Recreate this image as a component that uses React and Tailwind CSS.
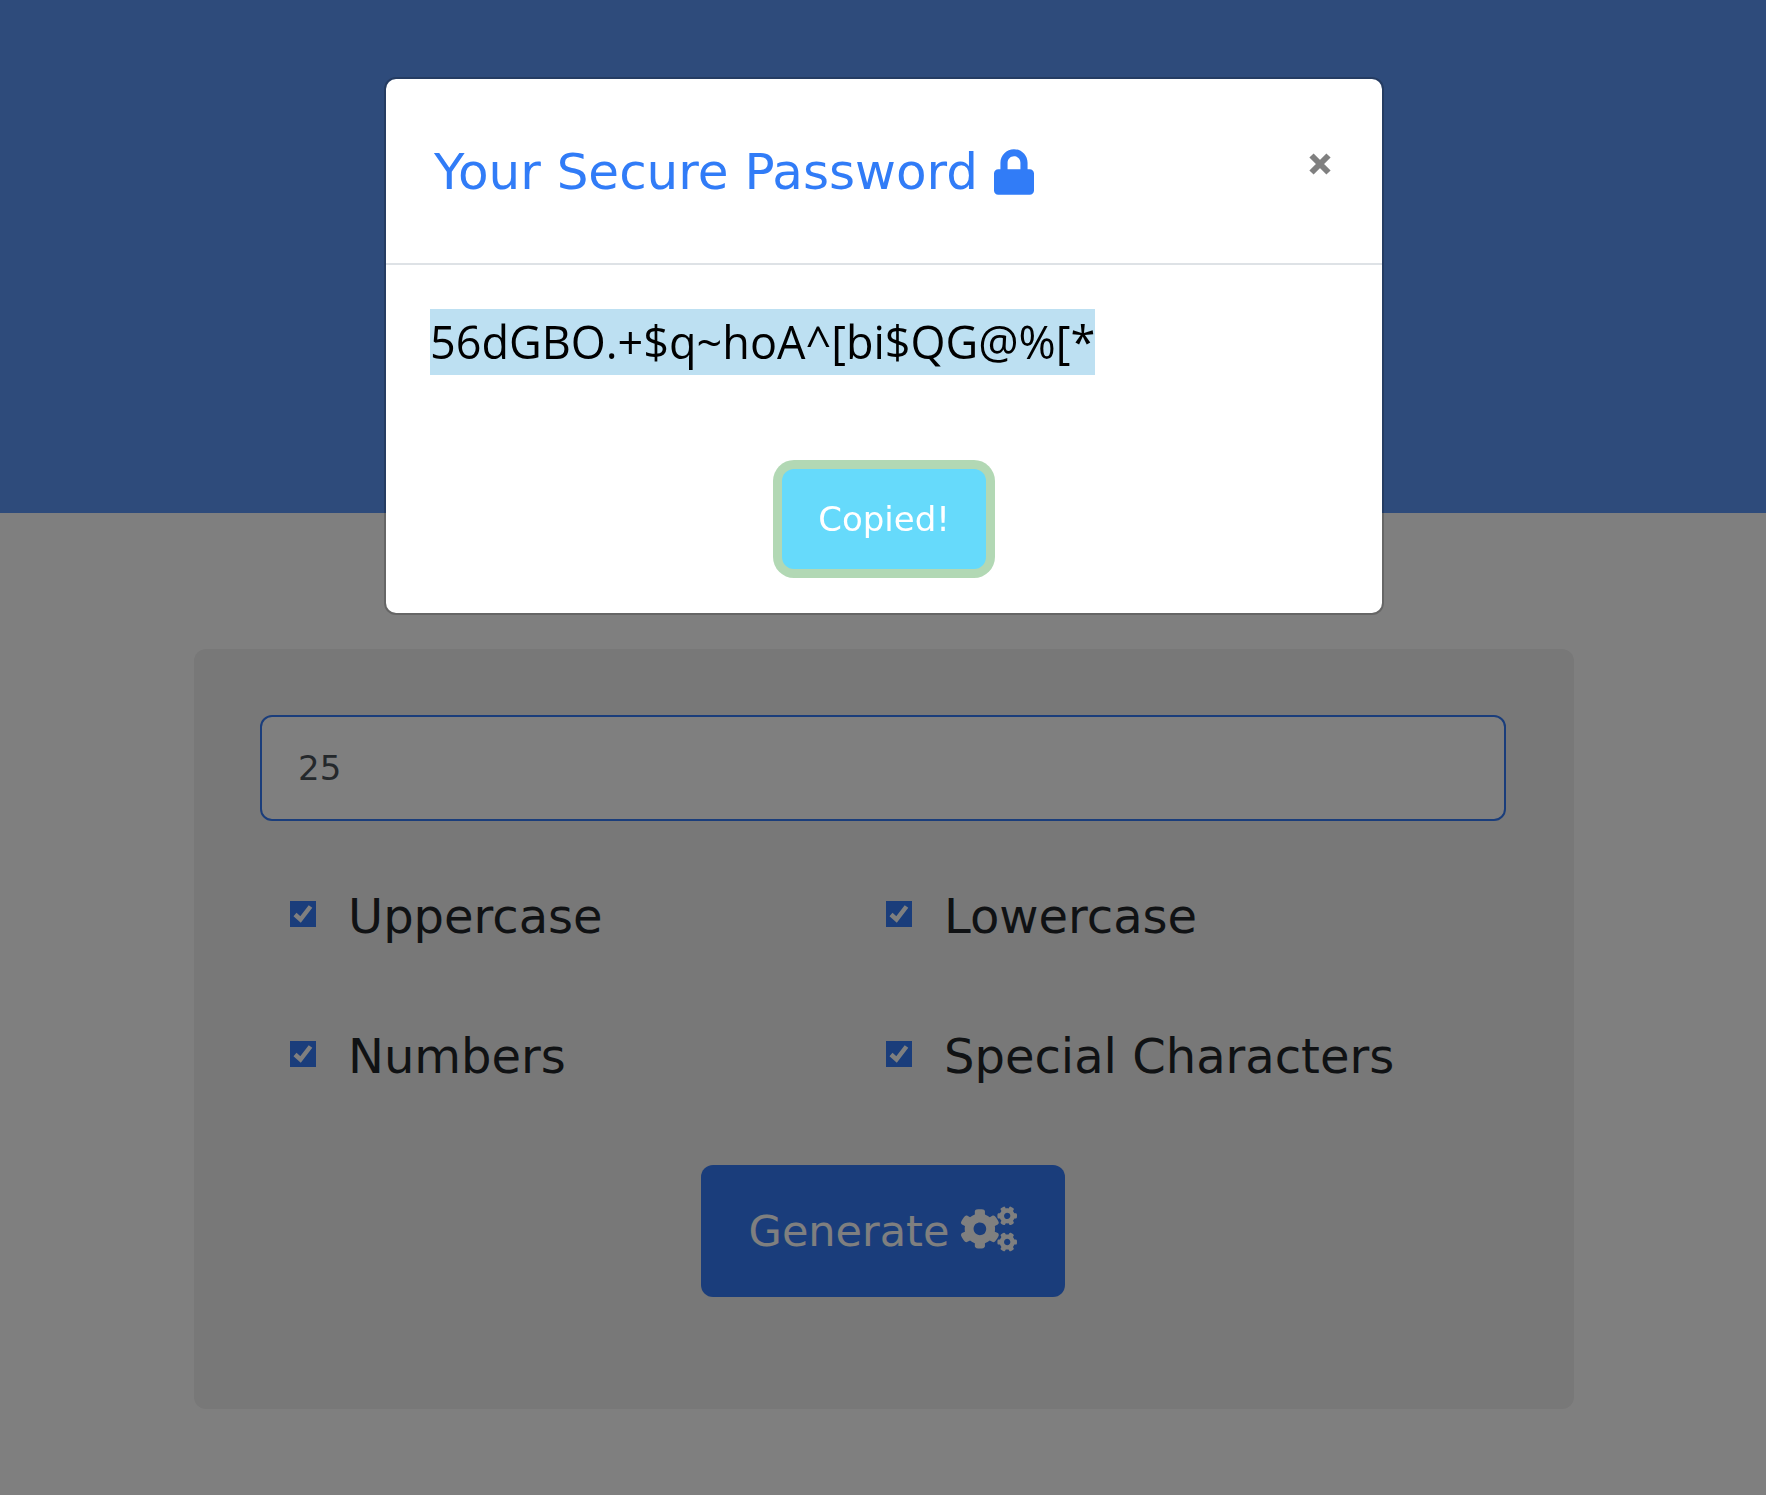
import { FaLock, FaCogs } from "react-icons/fa";

const options = [
  { id: "uppercase", label: "Uppercase" },
  { id: "lowercase", label: "Lowercase" },
  { id: "numbers", label: "Numbers" },
  { id: "special", label: "Special Characters" },
];

function Option({ id, label }) {
  return (
    <div className="flex items-center gap-8 pl-[30px]">
      <span className="mb-1 grid h-[26px] w-[26px] shrink-0">
        <input
          id={id}
          type="checkbox"
          defaultChecked
          className="col-start-1 row-start-1 h-[26px] w-[26px] appearance-none bg-[#357bf6]"
        />
        <svg viewBox="0 0 26 26" className="pointer-events-none col-start-1 row-start-1" fill="none" stroke="white" strokeWidth="4.5">
          <path d="M5 13.5 L10.5 18.5 L20.5 5.5" />
        </svg>
      </span>
      <label htmlFor={id} className="text-[48px] leading-[66px] whitespace-nowrap text-[#212529]">
        {label}
      </label>
    </div>
  );
}

function Dialog() {
  return (
    <div className="fixed inset-0 bg-black/50 pt-[77px] pr-4 pl-[18px]">
      <section
        role="dialog"
        aria-labelledby="dialog-title"
        className="mx-auto w-full max-w-[1000px] rounded-xl border-2 border-black/20 bg-white bg-clip-padding"
      >
        <header className="flex items-start justify-between border-b-2 border-[#dee2e6] pt-[60px] pr-11 pb-[58px] pl-12">
          <h2 id="dialog-title" className="flex items-center gap-4 text-[50px] leading-[66px] text-[#317cf7]">
            Your Secure Password
            <FaLock className="h-[46px] w-10" />
          </h2>
          <button type="button" aria-label="Close" className="mt-[9px] mr-[2px] p-1 text-[#808080]">
            <svg viewBox="0 0 24 24" className="h-6 w-6" stroke="currentColor" strokeWidth="6">
              <path d="M3.5 3.5 L20.5 20.5 M20.5 3.5 L3.5 20.5" />
            </svg>
          </button>
        </header>
        <div className="px-11 pt-11 pb-11">
          <p className="font-['Open_Sans',sans-serif] text-[45px] leading-[66px] text-black">
            <span className="inline-block bg-[#bde0f2]">56dGBO.+$q~hoA^[bi$QG@%[*</span>
          </p>
          <div className="mt-[94px] flex justify-center">
            <button
              type="button"
              className="h-[100px] rounded-xl bg-[#66dafb] px-9 text-[34px] leading-[48px] text-white ring-[9px] ring-[#b2d8b4]"
            >
              Copied!
            </button>
          </div>
        </div>
      </section>
    </div>
  );
}

export default function App() {
  return (
    <div className="min-h-screen bg-white font-['DejaVu_Sans',sans-serif]">
      <div className="h-[513px] bg-[#5c96f6]" />
      <main className="pt-[136px] pr-[192px] pb-[86px] pl-[194px]">
        <form className="rounded-xl bg-[#f0f0f0] pt-[66px] pr-[68px] pb-28 pl-[66px]">
          <input
            type="text"
            aria-label="Password length"
            defaultValue="25"
            className="block h-[106px] w-full rounded-xl border-2 border-[#357bf6] bg-white px-9 text-[34px] text-[#495057]"
          />
          <div className="mt-[62px] grid grid-cols-[596px_1fr] gap-y-[74px]">
            {options.map((option) => (
              <Option key={option.id} {...option} />
            ))}
          </div>
          <div className="mt-[76px] flex justify-center">
            <button
              type="button"
              className="flex h-[132px] items-center gap-3 rounded-xl bg-[#357bf6] px-12 text-[43px] text-white"
            >
              Generate
              <FaCogs className="mb-1 h-[46px] w-14" />
            </button>
          </div>
        </form>
      </main>
      <Dialog />
    </div>
  );
}
